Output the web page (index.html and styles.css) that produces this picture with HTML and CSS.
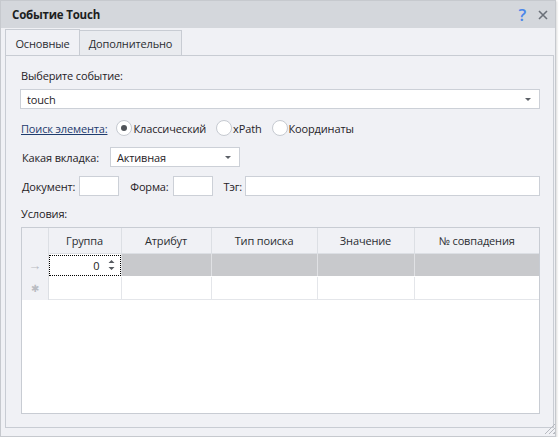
FILE: index.html
```html
<!DOCTYPE html>
<html lang="ru">
<head>
    <meta charset="UTF-8">
    <title>Событие Touch</title>
    <link rel="stylesheet" href="styles.css">
</head>
<body>
    <div class="window">
        <div class="titlebar">
            <span class="title">Событие Touch</span>
            <span class="help">?</span>
            <svg class="close" width="10" height="10" viewBox="0 0 10 10">
                <path d="M1 1 L9 9 M9 1 L1 9" stroke="#6b7079" stroke-width="1.6"/>
            </svg>
        </div>

        <div class="tabs">
            <div class="tab active">Основные</div>
            <div class="tab">Дополнительно</div>
        </div>

        <div class="pane">
            <div class="caption">Выберите событие:</div>
            <div class="combo wide">
                <span>touch</span>
                <span class="arrow"></span>
            </div>

            <div class="radio-row">
                <span class="link">Поиск элемента:</span>
                <label class="radio"><span class="dot checked"></span>Классический</label>
                <label class="radio"><span class="dot"></span>xPath</label>
                <label class="radio"><span class="dot"></span>Координаты</label>
            </div>

            <div class="field-row">
                <span>Какая вкладка:</span>
                <div class="combo tab-combo">
                    <span>Активная</span>
                    <span class="arrow"></span>
                </div>
            </div>

            <div class="field-row second">
                <span>Документ:</span>
                <div class="box small"></div>
                <span class="gap-label">Форма:</span>
                <div class="box small"></div>
                <span class="gap-label">Тэг:</span>
                <div class="box grow"></div>
            </div>

            <div class="caption cond">Условия:</div>

            <div class="grid">
                <table>
                    <colgroup>
                        <col style="width: 26px">
                        <col style="width: 73px">
                        <col style="width: 90px">
                        <col style="width: 106px">
                        <col style="width: 97px">
                        <col>
                    </colgroup>
                    <tr class="head">
                        <th class="ind"></th>
                        <th>Группа</th>
                        <th>Атрибут</th>
                        <th>Тип поиска</th>
                        <th>Значение</th>
                        <th>№ совпадения</th>
                    </tr>
                    <tr class="row current">
                        <td class="ind">&#8594;</td>
                        <td class="editor">
                            <div class="edit-box">
                                <span>0</span>
                                <svg width="7" height="12" viewBox="0 0 7 12">
                                    <path d="M0.5 4 L3.5 1 L6.5 4 Z M0.5 8 L3.5 11 L6.5 8 Z" fill="#55595f"/>
                                </svg>
                            </div>
                        </td>
                        <td></td><td></td><td></td><td></td>
                    </tr>
                    <tr class="row new">
                        <td class="ind star">&#10033;</td>
                        <td></td><td></td><td></td><td></td><td></td>
                    </tr>
                </table>
            </div>
            <div class="grip"></div>
        </div>
    </div>
</body>
</html>
```

FILE: styles.css
```css
body {
    margin: 0;
    background: #ffffff;
    font-family: "Open Sans", "Liberation Sans", sans-serif;
    font-size: 11px;
    letter-spacing: -0.15px;
    color: #1f2226;
}
.window {
    width: 556px;
    height: 437px;
    box-sizing: border-box;
    border: 1px solid #c6c9ce;
    background: #f0f1f5;
    display: flex;
    flex-direction: column;
    box-shadow: 1px 1px 2px rgba(0, 0, 0, 0.15);
}
.titlebar {
    height: 27px;
    background: #d4d7dc;
    display: flex;
    align-items: center;
    padding: 0 7px 0 11px;
}
.title {
    font-weight: bold;
    font-size: 11.5px;
    letter-spacing: -0.2px;
    flex: 1;
    color: #1c1e21;
}
.help {
    color: #4a86ea;
    font-size: 17px;
    font-weight: 600;
    margin-right: 12px;
    line-height: 1;
}
.tabs {
    height: 27px;
    display: flex;
    align-items: flex-end;
    padding-left: 4px;
}
.tab {
    height: 25px;
    box-sizing: border-box;
    border: 1px solid #c8ccd3;
    border-bottom: none;
    background: #e9ebef;
    padding: 0 10px;
    display: flex;
    align-items: center;
    color: #2a2d31;
}
.tab.active {
    height: 27px;
    background: #f0f1f5;
    width: 75px;
    justify-content: center;
    margin-bottom: -1px;
    position: relative;
}
.tab + .tab {
    border-left: none;
    width: 102px;
    justify-content: center;
}
.pane {
    flex: 1;
    margin: 0 1px 8px 4px;
    border: 1px solid #c8ccd3;
    padding: 12px 12px 13px 14px;
    display: flex;
    flex-direction: column;
    position: relative;
}
.caption {
    height: 16px;
    padding-left: 1px;
    margin-bottom: 5px;
}
.combo {
    height: 20px;
    box-sizing: border-box;
    background: #ffffff;
    border: 1px solid #ccd0d7;
    display: flex;
    align-items: center;
    padding: 0 8px 0 6px;
}
.combo span:first-child {
    flex: 1;
}
.arrow {
    width: 0;
    height: 0;
    border-left: 3px solid transparent;
    border-right: 3px solid transparent;
    border-top: 3px solid #5c6067;
    margin-top: 1px;
}
.wide {
    margin-right: 1px;
}
.radio-row {
    display: flex;
    align-items: center;
    height: 18px;
    margin-top: 10px;
    padding-left: 1px;
}
.link {
    text-decoration: underline;
    color: #1f3c6e;
    margin-right: 9px;
}
.radio {
    display: flex;
    align-items: center;
    margin-right: 10px;
}
.dot {
    width: 14px;
    height: 14px;
    border-radius: 50%;
    border: 1px solid #c6cad1;
    background: #ffffff;
    margin-right: 1px;
    display: flex;
    align-items: center;
    justify-content: center;
}
.dot.checked::after {
    content: "";
    width: 6px;
    height: 6px;
    border-radius: 50%;
    background: #505459;
}
.field-row {
    display: flex;
    align-items: center;
    height: 20px;
    margin-top: 10px;
    padding-left: 2px;
}
.field-row.second {
    margin-top: 9px;
}
.tab-combo {
    width: 130px;
    margin-left: 11px;
}
.box {
    height: 20px;
    box-sizing: border-box;
    background: #ffffff;
    border: 1px solid #ccd0d7;
    margin-left: 4px;
}
.small {
    width: 40px;
}
.grow {
    flex: 1;
    margin-right: 1px;
    margin-left: 3px;
}
.gap-label {
    margin-left: 11px;
}
.cond {
    margin-top: 10px;
    margin-bottom: 2px;
}
.grid {
    flex: 1;
    background: #ffffff;
    border: 1px solid #c8ccd3;
    margin-left: 1px;
    margin-right: 1px;
    margin-top: 3px;
}
table {
    width: 100%;
    border-collapse: collapse;
    table-layout: fixed;
}
th {
    height: 25px;
    background: #f0f1f5;
    font-weight: normal;
    border-right: 1px solid #dcdfe4;
    border-bottom: 1px solid #dcdfe4;
    color: #2a2d31;
    padding: 0;
}
th:last-child,
td:last-child {
    border-right: none;
}
td {
    height: 22px;
    border-right: 1px solid #e4e6ea;
    border-bottom: 1px solid #e4e6ea;
    padding: 0;
}
td.ind,
th.ind {
    background: #f0f1f5;
    text-align: center;
    color: #b9bcc2;
    border-bottom: none;
    border-right: 1px solid #dcdfe4;
}
td.ind {
    font-size: 13px;
}
.current td {
    background: #c8c9cc;
    border-right-color: #e0e1e4;
    border-bottom-color: #ffffff;
}
.current td.ind {
    background: #f0f1f5;
}
.current td.editor {
    background: #ffffff;
}
.edit-box {
    height: 21px;
    box-sizing: border-box;
    border: 1px dotted #000000;
    display: flex;
    align-items: center;
    justify-content: flex-end;
    padding-right: 5px;
    gap: 8px;
    color: #1c1e21;
}
td.star {
    font-size: 10px;
}
.grip {
    position: absolute;
    right: -2px;
    bottom: -7px;
    width: 11px;
    height: 11px;
    background: repeating-linear-gradient(135deg, transparent 0 2px, #b7bac0 2px 3px);
    clip-path: polygon(100% 0, 100% 100%, 0 100%);
}
```
